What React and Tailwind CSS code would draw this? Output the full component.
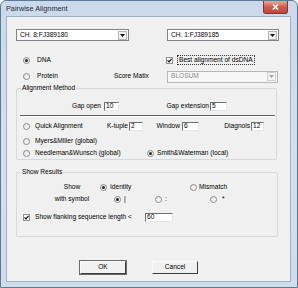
import React from 'react';

const font = "font-['Liberation_Sans',Arial,sans-serif]";

function Radio({ checked }) {
  return (
    <span className="flex h-[7px] w-[7px] shrink-0 items-center justify-center rounded-full border border-[#8a8a8a] bg-gradient-to-br from-[#e2e2e2] to-white">
      {checked && <span className="h-[3px] w-[3px] rounded-full bg-[#1c2a3a]" />}
    </span>
  );
}

function Check({ checked }) {
  return (
    <span className="flex h-[7px] w-[7px] shrink-0 items-center justify-center border border-[#8e8f8f] bg-white">
      {checked && (
        <svg width="5" height="5" viewBox="0 0 5 5">
          <path d="M0.5 2.4 L2 3.9 L4.6 0.8" stroke="#111" strokeWidth="1.2" fill="none" />
        </svg>
      )}
    </span>
  );
}

function Field({ value, w }) {
  return (
    <span className={`flex h-[9px] shrink-0 items-center border-l border-t border-l-[#6f6f6f] border-t-[#6f6f6f] border-b border-r border-b-[#e6e6e6] border-r-[#e6e6e6] bg-white pl-[1px] ${w}`}>
      {value}
    </span>
  );
}

function Combo({ value, w, disabled }) {
  return (
    <div className={`flex h-[12px] items-center justify-between border ${disabled ? 'border-[#b4b8bc] bg-[#f7f7f7] text-[#8d8d8d]' : 'border-[#7f848b] bg-white text-black'} ${w}`}>
      <span className="pl-[3px]">{value}</span>
      <span className={`mr-[1px] flex h-[9px] w-[9px] items-center justify-center border ${disabled ? 'border-[#d0d0d0] bg-[#f4f4f4]' : 'border-[#b5b5b5] bg-[#f2f2f2]'}`}>
        <svg width="5" height="3" viewBox="0 0 5 3">
          <path d="M0 0 H5 L2.5 3 Z" fill={disabled ? '#a0a0a0' : '#111'} />
        </svg>
      </span>
    </div>
  );
}

function Group({ label, h, w, children }) {
  return (
    <div className={`relative ml-[9px] rounded-[2px] border border-[#d3d9de] ${h} ${w}`}>
      <span className="absolute -top-[4px] left-[4px] bg-[#f0f0f0] px-[1px] leading-none">{label}</span>
      {children}
    </div>
  );
}

function Button({ children, strong }) {
  return (
    <div className={`flex h-[13px] w-[46px] items-center justify-center border border-l-[#fafafa] border-t-[#fafafa] border-r-[#3c3c3c] border-b-[#3c3c3c] bg-[#f1f1f1] ${strong ? 'outline outline-1 outline-[#6a6a6a]' : ''}`}>
      {children}
    </div>
  );
}

export default function App() {
  return (
    <div className={`${font} h-[288px] w-[298px] rounded-t-[6px] border border-[#5f7896] bg-gradient-to-b from-[#c9d9eb] via-[#d3e0ee] to-[#cfdcea] text-[6.6px] text-black`}>
      <div className="flex h-[16px] items-start justify-between">
        <span className="ml-[5px] mt-[4px] text-[7.3px] leading-none text-[#1e2a36]">Pairwise Alignment</span>
        <span className="mr-[9px] flex h-[13px] w-[25px] items-center justify-center rounded-b-[3px] border border-t-0 border-[#7d3a33] bg-gradient-to-b from-[#e7a99f] via-[#cf5a4b] to-[#c0463a]">
          <svg width="7" height="6" viewBox="0 0 7 6">
            <path d="M1 0.5 L6 5.5 M6 0.5 L1 5.5" stroke="#fff" strokeWidth="1.6" />
          </svg>
        </span>
      </div>

      <div className="ml-[6px] h-[264px] w-[283px] bg-[#f0f0f0] ring-1 ring-[#9fb1c4]">
        <div className="flex pt-[12px]">
          <div className="ml-[9px]"><Combo value="CH. 8:FJ389180" w="w-[113px]" /></div>
          <div className="ml-[38px]"><Combo value="CH. 1:FJ389185" w="w-[112px]" /></div>
        </div>

        <div className="mt-[14px] flex h-[10px] items-center leading-none">
          <div className="flex w-[159px] items-center gap-[7px] pl-[16px]">
            <Radio checked /> <span>DNA</span>
          </div>
          <Check checked />
          <span className="ml-[4px] border border-dotted border-[#333] px-[1px] py-[1px]">Best alignment of dsDNA</span>
        </div>

        <div className="mt-[6px] flex h-[11px] items-center leading-none">
          <div className="flex w-[107px] items-center gap-[7px] pl-[16px]">
            <Radio /> <span>Protein</span>
          </div>
          <span className="w-[53px]">Score Matix</span>
          <Combo value="BLOSUM" w="w-[111px]" disabled />
        </div>

        <div className="mt-[6px]">
          <Group label="Alignment Method" h="h-[72px]" w="w-[261px]">
            <div className="mt-[13px] flex h-[9px] items-center leading-none">
              <span className="w-[87px] pr-[3px] text-right">Gap open</span>
              <Field value="10" w="w-[15px]" />
              <span className="w-[91px] pr-[1px] text-right">Gap extension</span>
              <Field value="5" w="w-[17px]" />
            </div>
            <div className="ml-[3px] mt-[4px] h-[2px] w-[255px] border-b border-b-white bg-[#5e5e5e]" />
            <div className="mt-[4px] flex h-[10px] items-center leading-none">
              <div className="flex w-[90px] items-center gap-[5px] pl-[6px]">
                <Radio /> <span>Quick Alignment</span>
              </div>
              <span className="w-[22px] pr-[1px] text-right">K-tuple</span>
              <Field value="2" w="w-[14px]" />
              <span className="w-[39px] pr-[2px] text-right">Window</span>
              <Field value="6" w="w-[17px]" />
              <span className="w-[52px] pr-[1px] text-right">Diagnols</span>
              <Field value="12" w="w-[13px]" />
            </div>
            <div className="mt-[5px] flex h-[10px] items-center gap-[5px] pl-[6px] leading-none">
              <Radio /> <span>Myers&amp;Miller (global)</span>
            </div>
            <div className="mt-[2px] flex h-[10px] items-center leading-none">
              <div className="flex w-[130px] items-center gap-[5px] pl-[6px]">
                <Radio /> <span>Needleman&amp;Wunsch (global)</span>
              </div>
              <Radio checked />
              <span className="ml-[3px]">Smith&amp;Waterman (local)</span>
            </div>
          </Group>
        </div>

        <div className="mt-[12px]">
          <Group label="Show Results" h="h-[65px]" w="w-[262px]">
            <div className="mt-[9px] flex h-[10px] items-center leading-none">
              <span className="ml-[30px] w-[50px] text-center">Show</span>
              <div className="ml-[3px] flex w-[90px] items-center gap-[3px]">
                <Radio checked /> <span>Identity</span>
              </div>
              <Radio />
              <span className="ml-[2px]">Mismatch</span>
            </div>
            <div className="mt-[2px] flex h-[10px] items-center leading-none">
              <span className="ml-[30px] w-[50px] text-center">with symbol</span>
              <div className="ml-[17px] flex w-[41px] items-center gap-[3px]">
                <Radio checked /> <span>|</span>
              </div>
              <div className="flex w-[55px] items-center gap-[3px]">
                <Radio /> <span>:</span>
              </div>
              <Radio />
              <span className="ml-[5px]">*</span>
            </div>
            <div className="mt-[9px] flex h-[9px] items-center leading-none">
              <div className="flex w-[128px] items-center gap-[5px] pl-[6px]">
                <Check checked /> <span>Show flanking sequence length &lt;</span>
              </div>
              <Field value="60" w="w-[28px]" />
            </div>
          </Group>
        </div>

        <div className="ml-[73px] mt-[24px] flex gap-[26px] leading-none">
          <Button strong>OK</Button>
          <Button>Cancel</Button>
        </div>
      </div>
    </div>
  );
}
